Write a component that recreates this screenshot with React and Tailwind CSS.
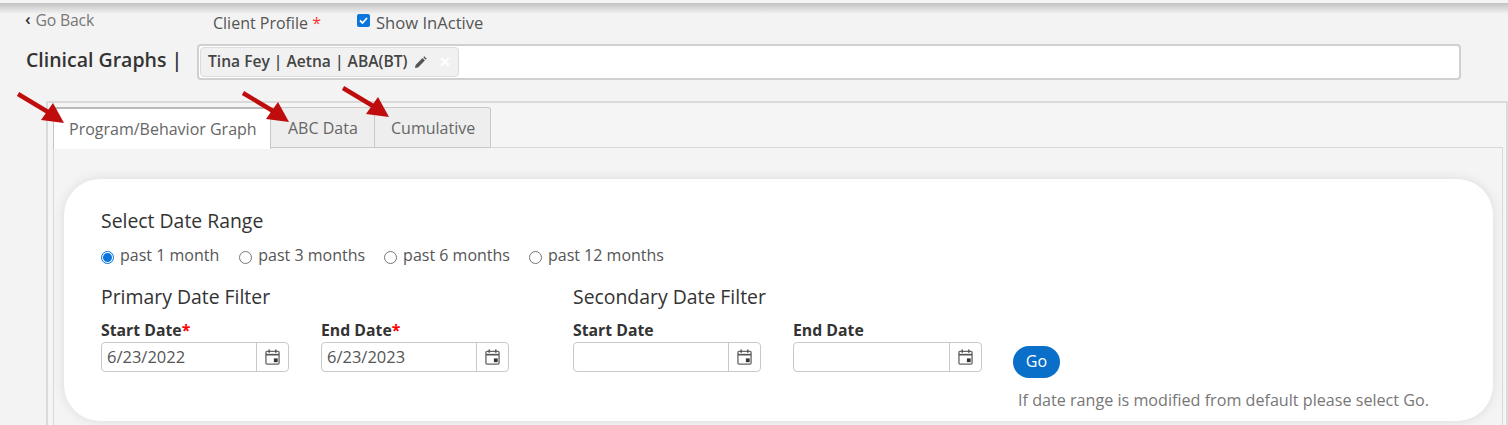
import React from "react";

const font = "font-['Open_Sans','Noto_Sans',sans-serif]";

const CalendarIcon = () => (
  <svg width="15" height="16" viewBox="0 0 16 17" fill="none">
    <rect x="1" y="2.5" width="14" height="13.5" rx="1" stroke="#666" strokeWidth="1.4" />
    <path d="M1 6h14" stroke="#555" strokeWidth="1.8" />
    <path d="M4.5 0.5v3.5M11.5 0.5v3.5" stroke="#555" strokeWidth="1.6" />
    <rect x="9.5" y="10" width="4" height="4" fill="#333" />
  </svg>
);

const Arrow = ({ className }) => (
  <svg className={`absolute z-20 ${className}`} width="50" height="34" viewBox="-2 -2 50 34" fill="none">
    <path d="M0 0L30 18" stroke="#bf0d0d" strokeWidth="4.4" />
    <path d="M35 9L46 29L23 26Z" fill="#bf0d0d" />
  </svg>
);

const DateField = ({ label, value, required, width = "w-[188px]" }) => (
  <div className={width}>
    <div className="text-[15.8px] leading-[20px] font-bold text-[#333]">
      {label}
      {required && <span className="text-[#f00]">*</span>}
    </div>
    <div className="flex h-[30px] rounded-[4px] border border-[#c9c9c9] bg-white mt-[2px]">
      <div className="flex-1 pl-[5px] text-[16.5px] leading-[28px] text-[#555]">{value}</div>
      <div className="w-[32px] border-l border-[#c9c9c9] flex items-center justify-center">
        <CalendarIcon />
      </div>
    </div>
  </div>
);

const Radio = ({ label, checked, className }) => (
  <div className={`flex items-center ${className}`}>
    {checked ? (
      <span className="w-[13px] h-[13px] mt-[5px] rounded-full border border-[#0075d9] flex items-center justify-center bg-white">
        <span className="w-[9px] h-[9px] rounded-full bg-[#0a75dc]" />
      </span>
    ) : (
      <span className="w-[13px] h-[13px] mt-[5px] rounded-full border border-[#777] bg-white" />
    )}
    <span className="ml-[6px] text-[16px] leading-[20px] text-[#555]">{label}</span>
  </div>
);

const App = () => {
  return (
    <div className={`relative w-[1508px] h-[425px] overflow-hidden bg-[#f3f3f3] ${font}`}>
      {/* Top shadow */}
      <div className="h-[3px] bg-[#f4f4f4]" />
      <div className="h-[11px] -mb-[11px] bg-gradient-to-b from-[#c2c2c2] to-[#f3f3f3]" />

      {/* Header row */}
      <div className="flex h-[33px]">
        <div className="w-[213px] pl-[25px] pt-[7px] text-[15.8px] leading-[20px] text-[#777] flex items-start tracking-[-0.2px]">
          <span className="text-[#333] mr-[5px] text-[17px] font-semibold leading-[18px]">‹</span>Go Back
        </div>
        <div className="pt-[10px] text-[16px] leading-[20px] text-[#555]">
          Client Profile <span className="text-[#f33]">*</span>
        </div>
        <div className="ml-[36px] pt-[10px] flex items-start text-[16.6px] leading-[20px] text-[#555]">
          <span className="w-[13px] h-[13px] mt-[1px] mr-[6px] rounded-[2px] bg-[#0a75dc] flex items-center justify-center">
            <svg width="11" height="11" viewBox="0 0 11 11" fill="none">
              <path d="M2 5.5L4.5 8L9 3" stroke="#fff" strokeWidth="1.8" />
            </svg>
          </span>
          Show InActive
        </div>
      </div>

      {/* Title row */}
      <div className="flex items-start h-[65px] pt-[8px]">
        <div className="w-[197px] pl-[26px] pt-[2px] text-[19.5px] leading-[27px] font-semibold text-[#333]">
          Clinical Graphs |
        </div>
        <div className="w-[1264px] h-[36px] rounded-[4px] border-2 border-[#d0d0d0] bg-white flex items-center pl-[1px]">
          <div className="h-[30px] w-[259px] rounded-[4px] border border-[#dcdcdc] bg-[#f1f1f1] flex items-center pl-[7px] text-[15.6px] font-semibold text-[#444]">
            Tina Fey | Aetna | ABA(BT)
            <svg className="ml-[7px]" width="13" height="13" viewBox="0 0 13 13" fill="#555">
              <path d="M1 12l.6-3L8.5 2.1l2.4 2.4L4 11.4zM9.3 1.3l1-1 2.4 2.4-1 1z" />
            </svg>
            <span className="ml-[12px] text-[14px] leading-none text-white">✕</span>
          </div>
        </div>
      </div>

      {/* Outer panel */}
      <div className="ml-[46px] h-[330px] border-l-2 border-t-2 border-r-2 border-[#dadada] bg-[#f5f5f5] pl-[5px] pr-[3px] pt-[4px]">
        {/* Tabs */}
        <div className="flex h-[41px] text-[16px] text-[#666]">
          <div className="w-[218px] h-[42px] border-t-2 border-l border-r border-[#c6c6c6] border-t-[#bbb] bg-white pl-[15px] leading-[41px] relative z-10">
            Program/Behavior Graph
          </div>
          <div className="w-[104px] border-t border-r border-b border-[#c9c9c9] bg-[#eeeeee] pl-[17px] leading-[41px]">
            ABC Data
          </div>
          <div className="w-[116px] border-t border-r border-b border-[#c9c9c9] rounded-tr-[3px] bg-[#eeeeee] pl-[16px] leading-[41px]">
            Cumulative
          </div>
        </div>

        {/* Tab content */}
        <div className="h-[300px] -mt-[1px] border-l border-t border-r border-[#d9d9d9] bg-[#f4f4f4] pt-[31px] pl-[10px] pr-[9px]">
          <div className="h-[242px] rounded-[36px] bg-white shadow-[0_0_12px_rgba(0,0,0,0.1)] pl-[37px] pt-[29px]">
            <div className="text-[19.4px] leading-[26px] font-medium text-[#333]">Select Date Range</div>
            <div className="flex mt-[11px] h-[20px]">
              <Radio label="past 1 month" checked />
              <Radio label="past 3 months" className="ml-[20px]" />
              <Radio label="past 6 months" className="ml-[19px]" />
              <Radio label="past 12 months" className="ml-[19px]" />
            </div>
            <div className="flex mt-[19px]">
              <div className="w-[472px]">
                <div className="text-[19.4px] leading-[26px] font-medium text-[#333]">Primary Date Filter</div>
                <div className="flex gap-[32px] mt-[10px]">
                  <DateField label="Start Date" value="6/23/2022" required />
                  <DateField label="End Date" value="6/23/2023" required />
                </div>
              </div>
              <div className="w-[440px]">
                <div className="text-[19.4px] leading-[26px] font-medium text-[#333]">Secondary Date Filter</div>
                <div className="flex gap-[32px] mt-[10px]">
                  <DateField label="Start Date" />
                  <DateField label="End Date" width="w-[189px]" />
                </div>
              </div>
              <div className="pt-[62px]">
                <div className="w-[47px] h-[32px] rounded-full bg-[#0a6fc9] text-white text-[16px] leading-[31px] text-center">Go</div>
                <div className="mt-[12px] ml-[5px] text-[16.15px] leading-[20px] text-[#777] whitespace-nowrap">
                  If date range is modified from default please select Go.
                </div>
              </div>
            </div>
          </div>
        </div>
      </div>

      {/* Annotation arrows */}
      <Arrow className="left-[16px] top-[92px]" />
      <Arrow className="left-[241px] top-[91px]" />
      <Arrow className="left-[341px] top-[86px]" />
    </div>
  );
};

export default App;
